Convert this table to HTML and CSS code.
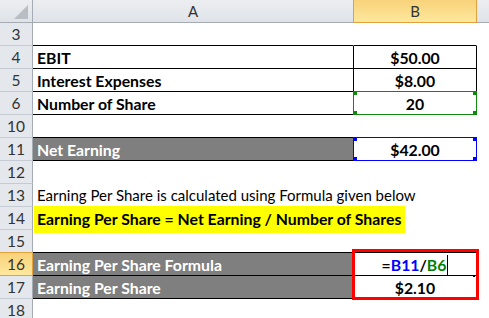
FILE: index.html
```html
<!DOCTYPE html>
<html>
<head>
<meta charset="utf-8">
<link rel="stylesheet" href="styles.css">
</head>
<body>
<div class="sheet">
  <div class="ch corner"><svg class="tri" width="33" height="22" viewBox="0 0 33 22"><polygon points="14,19 28,19 28,5" fill="#b9bec4"/></svg></div>
  <div class="ch cha">A</div>
  <div class="ch chb">B</div>
  <div class="ch chr"></div>

  <div class="rh">3</div><div class="c a bb"></div><div class="c b bb"></div><div class="c r"></div>

  <div class="rh">4</div><div class="c a bb br bold">EBIT</div><div class="c b bb br bold ctr">$50.00</div><div class="c r"></div>

  <div class="rh">5</div><div class="c a bb br bold">Interest Expenses</div><div class="c b bb br bold ctr">$8.00</div><div class="c r"></div>

  <div class="rh">6</div><div class="c a bb br bold">Number of Share</div><div class="c b bb br bold ctr rel">20<div class="sel green"><i class="sq tl"></i><i class="sq tr"></i><i class="sq bl"></i><i class="sq brr"></i></div></div><div class="c r"></div>

  <div class="rh">10</div><div class="c a bb"></div><div class="c b bb"></div><div class="c r"></div>

  <div class="rh">11</div><div class="c a bb br bold gray">Net Earning</div><div class="c b bb br bold ctr rel">$42.00<div class="sel blue"><i class="sq tl"></i><i class="sq tr"></i><i class="sq bl"></i><i class="sq brr"></i></div></div><div class="c r"></div>

  <div class="rh">12</div><div class="c a"></div><div class="c b"></div><div class="c r"></div>

  <div class="rh">13</div><div class="c a ovf">Earning Per Share is calculated using Formula given below</div><div class="c b"></div><div class="c r"></div>

  <div class="rh">14</div><div class="c a ovf top"><span class="hl bold">Earning Per Share = Net Earning / Number of Shares</span></div><div class="c b"></div><div class="c r"></div>

  <div class="rh act-prev">15</div><div class="c a bb"></div><div class="c b bb"></div><div class="c r"></div>

  <div class="rh act">16</div><div class="c a bb br bold gray">Earning Per Share Formula</div><div class="c b bb bold ctr rel"><span class="f-eq">=</span><span class="f-b">B11</span><span class="f-eq">/</span><span class="f-g">B6</span><span class="caret"></span><i class="handle"></i><div class="redbox"></div></div><div class="c r"></div>

  <div class="rh">17</div><div class="c a bb br bold gray">Earning Per Share</div><div class="c b bb br bold ctr">$2.10</div><div class="c r"></div>

  <div class="rh">18</div><div class="c a"></div><div class="c b"></div><div class="c r"></div>
</div>
</body>
</html>
```
FILE: styles.css
```css
html, body {
  margin: 0;
  padding: 0;
  background: #ffffff;
  overflow: hidden;
}

.sheet {
  display: grid;
  grid-template-columns: 33px 321px 123px 12px;
  grid-template-rows: 23px;
  grid-auto-rows: 23px;
  width: 489px;
  font-family: Lato, "Liberation Sans", sans-serif;
  font-size: 15px;
  color: #000;
}

.ch {
  box-sizing: border-box;
  background: linear-gradient(#eceef1, #dfe3e8);
  border-bottom: 1px solid #a4abb3;
  border-right: 1px solid #c3c8ce;
  color: #333;
  text-align: center;
  line-height: 22px;
  font-size: 15px;
}

.corner {
  position: relative;
  border-right: 1px solid #a4abb3;
}

.tri {
  display: block;
}

.cha {
  border-right-color: #e2a33f;
}

.chb {
  background: linear-gradient(#f8d27a, #fde89d);
  border-bottom-color: #e2a33f;
  border-right-color: #e2a33f;
}

.chr {
  border-right: none;
}

.rh {
  box-sizing: border-box;
  background: #e4e8ed;
  border-right: 1px solid #a4abb3;
  border-bottom: 1px solid #c5cbd2;
  color: #333;
  text-align: center;
  line-height: 23px;
  font-size: 15.5px;
}

.rh.act-prev {
  border-bottom-color: #e2a33f;
}

.rh.act {
  background: linear-gradient(#f8d27a, #fde89d);
  border-right-color: #e2a33f;
  border-bottom-color: #e2a33f;
}

.c {
  box-sizing: border-box;
  border-right: 1px solid transparent;
  border-bottom: 1px solid transparent;
  line-height: 23px;
  white-space: nowrap;
}

.a {
  padding-left: 4px;
}

.bb {
  border-bottom-color: #000;
}

.br {
  border-right-color: #000;
}

.bold {
  font-weight: 700;
  font-size: 15.8px;
}

.ctr {
  text-align: center;
}

.gray {
  background: #7f7f7f;
  color: #fff;
}

.ovf {
  overflow: visible;
  position: relative;
  z-index: 2;
}

.top {
  padding-left: 1px;
}

.hl {
  display: inline-block;
  background: #ffff00;
  width: 368px;
  height: 27px;
  padding-left: 3px;
  margin-top: -1px;
  line-height: 25px;
}

.rel {
  position: relative;
}

.sel {
  position: absolute;
  left: -1px;
  top: -1px;
  width: 124px;
  height: 24px;
  box-sizing: border-box;
  border: 1px solid;
}

.green {
  border-color: #0f8a0f;
}

.blue {
  border-color: #0000ff;
}

.sq {
  position: absolute;
  width: 4px;
  height: 4px;
}

.green .sq {
  background: #0f8a0f;
}

.blue .sq {
  background: #0000ff;
}

.sq.tl { left: -1px; top: -1px; }
.sq.tr { right: -1px; top: -1px; }
.sq.bl { left: -1px; bottom: -1px; }
.sq.brr { right: -1px; bottom: -1px; }

.f-eq { color: #000; }
.f-b { color: #0000ff; }
.f-g { color: #008000; }

.caret {
  display: inline-block;
  width: 1px;
  height: 21px;
  background: #000;
  vertical-align: -5px;
  margin-left: 1px;
}

.handle {
  position: absolute;
  right: 1px;
  bottom: -2px;
  width: 2px;
  height: 2px;
  background: #000;
}

.redbox {
  position: absolute;
  left: -2px;
  top: -4px;
  width: 127px;
  height: 51px;
  box-sizing: border-box;
  border: 3px solid #ff0000;
  z-index: 3;
}

.r {
  border: none;
}
```
